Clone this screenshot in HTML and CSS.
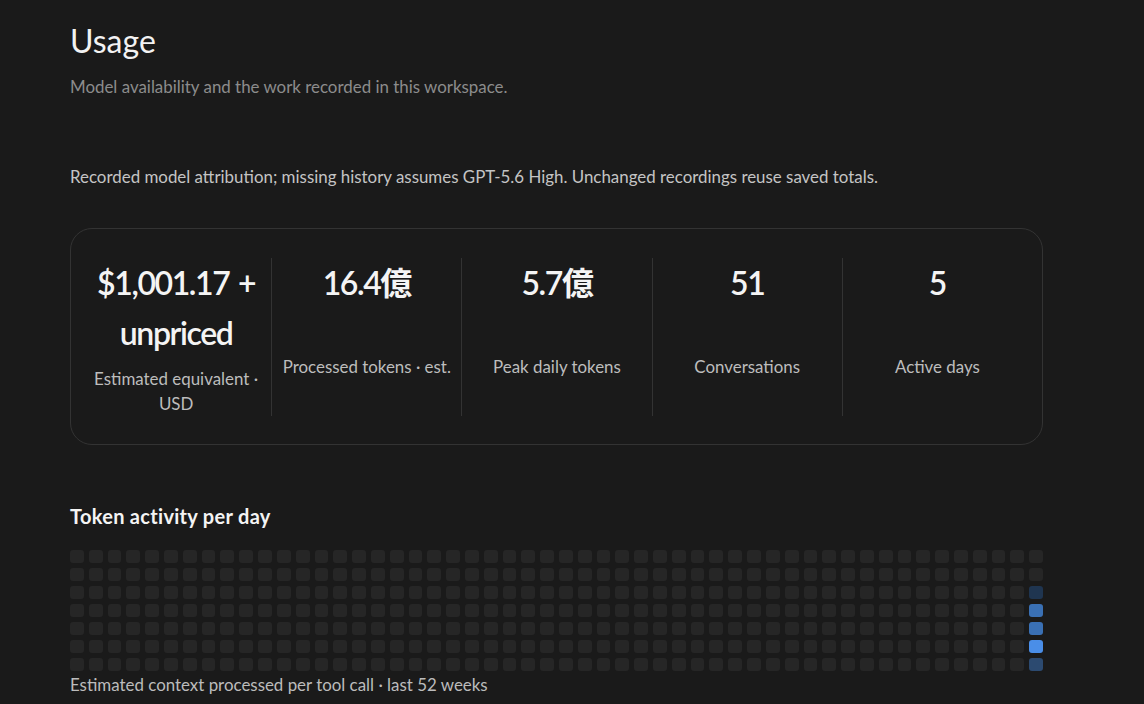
FILE: index.html
```html
<!DOCTYPE html>
<html>
<head>
    <title>Usage</title>
    <link rel="stylesheet" href="styles.css">
</head>
<body>
    <main class="page">
        <header class="page-head">
            <h1>Usage</h1>
            <p class="subtitle">Model availability and the work recorded in this workspace.</p>
        </header>

        <p class="note">Recorded model attribution; missing history assumes GPT-5.6 High. Unchanged recordings reuse saved totals.</p>

        <section class="stats">
            <div class="stat">
                <div class="stat-value">$1,001.17 + unpriced</div>
                <div class="stat-label">Estimated equivalent · USD</div>
            </div>
            <div class="stat">
                <div class="stat-value">16.4億</div>
                <div class="stat-label">Processed tokens · est.</div>
            </div>
            <div class="stat">
                <div class="stat-value">5.7億</div>
                <div class="stat-label">Peak daily tokens</div>
            </div>
            <div class="stat">
                <div class="stat-value">51</div>
                <div class="stat-label">Conversations</div>
            </div>
            <div class="stat">
                <div class="stat-value">5</div>
                <div class="stat-label">Active days</div>
            </div>
        </section>

        <section class="activity">
            <h3>Token activity per day</h3>
            <div class="heatmap" id="heatmap"></div>
            <p class="caption">Estimated context processed per tool call · last 52 weeks</p>
        </section>
    </main>
    <script>
        // 52 weeks x 7 days, filled column by column; only the current week has data
        const levels = new Array(52 * 7).fill(0);
        const lastWeek = [0, 0, 1, 3, 3, 4, 2];
        lastWeek.forEach((lvl, i) => { levels[51 * 7 + i] = lvl; });

        const heatmap = document.getElementById('heatmap');
        levels.forEach(lvl => {
            const cell = document.createElement('div');
            cell.className = 'cell level-' + lvl;
            heatmap.appendChild(cell);
        });
    </script>
</body>
</html>
```

FILE: styles.css
```css
body {
    margin: 0;
    padding: 0;
    background-color: #1a1a1a;
    color: #e8e8e8;
    font-family: "Segoe UI", Lato, "Noto Sans CJK JP", sans-serif;
    font-size: 16.9px;
}

.page {
    width: 973px;
    padding: 20px 0 0 70px;
}

.page-head h1 {
    margin: 0;
    font-size: 32px;
    font-weight: 400;
    line-height: 42px;
    color: #f2f2f2;
}

.subtitle {
    margin: 13px 0 0;
    line-height: 24px;
    color: #8c8c8c;
}

.note {
    margin: 66px 0 0;
    line-height: 24px;
    color: #c4c4c4;
}

.stats {
    display: grid;
    grid-template-columns: repeat(5, 1fr);
    margin-top: 39px;
    padding: 29px 10px 28px;
    border: 1px solid #333;
    border-radius: 22px;
}

.stat {
    display: flex;
    flex-direction: column;
    align-items: center;
    text-align: center;
    padding: 0 8px;
    border-left: 1px solid #333;
}

.stat:first-child {
    border-left: none;
}

.stat-value {
    margin-bottom: 8px;
    font-size: 32px;
    font-weight: 600;
    line-height: 50px;
    letter-spacing: -1.4px;
    word-spacing: 2px;
    color: #f4f4f4;
}

.stat-label {
    margin: auto 0;
    line-height: 25px;
    color: #bdbdbd;
}

.activity {
    margin-top: 58px;
}

.activity h3 {
    margin: 0 0 21px;
    font-size: 20px;
    font-weight: 700;
    line-height: 26px;
    letter-spacing: 0.3px;
    color: #f4f4f4;
}

.heatmap {
    display: grid;
    grid-template-columns: repeat(52, 1fr);
    grid-template-rows: repeat(7, 13px);
    grid-auto-flow: column;
    gap: 5px;
}

.cell {
    border-radius: 3px;
    background-color: #262626;
}

.level-1 { background-color: #1f3550; }
.level-2 { background-color: #2c4a70; }
.level-3 { background-color: #3a70b4; }
.level-4 { background-color: #4a8ee8; }

.caption {
    margin: 2px 0 0;
    line-height: 24px;
    color: #bcbcbc;
}
```
